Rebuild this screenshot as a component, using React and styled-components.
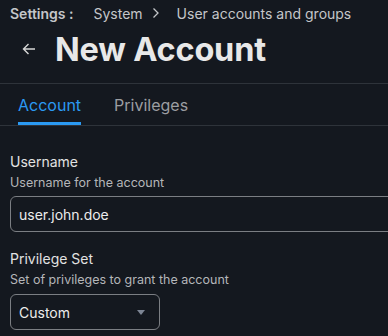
import styled, { createGlobalStyle } from "styled-components"

const Global = createGlobalStyle`
  html, body {
    margin: 0;
    padding: 0;
    background: #14181f;
    overflow: hidden;
  }
  body {
    font-family: Inter, "Noto Sans", sans-serif;
    color: #e6e6e6;
  }
`

const Page = styled.div`
  width: 388px;
  height: 336px;
  background: #14181f;
  overflow: hidden;
`

const Header = styled.header`
  padding: 4px 10px 0;
`

const Crumbs = styled.nav`
  display: flex;
  align-items: center;
  height: 18px;
  font-size: 14px;
  color: #c4c6c9;
  white-space: nowrap;
`

const CrumbRoot = styled.span`
  font-weight: 600;
  margin-right: 20px;
`

const Chevron = styled.span`
  margin: 0 17px 0 9px;
  display: inline-flex;
`

const TitleRow = styled.div`
  display: flex;
  align-items: center;
  height: 50px;
  padding-left: 12px;
  margin-top: 2px;
`

const BackButton = styled.button`
  display: flex;
  align-items: center;
  justify-content: center;
  background: none;
  border: 0;
  padding: 0;
  margin-right: 19px;
  color: #d6d6d6;
  cursor: pointer;
`

const Title = styled.h1`
  margin: 0;
  font-size: 32.5px;
  font-weight: 700;
  color: #e8e8e8;
  letter-spacing: -0.2px;
`

const Divider = styled.div`
  height: 1px;
  background: #2e333a;
  margin-top: ${p => p.$top || 0}px;
`

const Tabs = styled.div`
  display: flex;
  gap: 33px;
  padding: 0 18px;
  height: 41px;
`

const Tab = styled.button`
  position: relative;
  background: none;
  border: 0;
  padding: 0;
  font-family: inherit;
  font-size: 16px;
  color: ${p => (p.$active ? "#2b9af3" : "#9c9ea2")};
  cursor: pointer;
  &::after {
    content: "";
    position: absolute;
    left: 0;
    right: 0;
    bottom: 0;
    height: 3px;
    background: ${p => (p.$active ? "#2b9af3" : "transparent")};
  }
`

const Form = styled.div`
  padding: 27px 10px 0;
  display: flex;
  flex-direction: column;
  gap: 18px;
`

const Field = styled.div`
  display: flex;
  flex-direction: column;
`

const Label = styled.label`
  font-size: 14px;
  color: #e2e2e2;
  line-height: 17px;
`

const Help = styled.div`
  font-size: 12.5px;
  color: #b4b6b9;
  line-height: 16px;
  margin-top: 5px;
`

const Input = styled.input`
  box-sizing: border-box;
  margin-top: 5px;
  width: 400px;
  height: 36px;
  padding: 0 8px;
  background: #14181f;
  border: 1px solid #7b7e83;
  border-radius: 6px;
  font-family: inherit;
  font-size: 14px;
  color: #ececec;
  outline: none;
`

const Select = styled.div`
  box-sizing: border-box;
  margin-top: 6px;
  width: 150px;
  height: 36px;
  padding: 0 14px 0 8px;
  display: flex;
  align-items: center;
  justify-content: space-between;
  border: 1px solid #7b7e83;
  border-radius: 6px;
  font-size: 14px;
  color: #ececec;
`

const Caret = styled.span`
  width: 0;
  height: 0;
  border-left: 4px solid transparent;
  border-right: 4px solid transparent;
  border-top: 5px solid #7d8594;
`

export default function App() {
  return (
    <Page>
      <Global />
      <Header>
        <Crumbs>
          <CrumbRoot>Settings :</CrumbRoot>
          <span>System</span>
          <Chevron>
            <svg width="8" height="12" viewBox="0 0 8 12" fill="none">
              <path d="M1.5 1.5 L6 6 L1.5 10.5" stroke="#c4c6c9" strokeWidth="1.3" />
            </svg>
          </Chevron>
          <span>User accounts and groups</span>
        </Crumbs>
        <TitleRow>
          <BackButton aria-label="Back">
            <svg width="14" height="12" viewBox="0 0 14 12" fill="none">
              <path d="M13 6 H1.5 M6.5 1 L1.5 6 L6.5 11" stroke="#d6d6d6" strokeWidth="1.4" />
            </svg>
          </BackButton>
          <Title>New Account</Title>
        </TitleRow>
      </Header>
      <Divider $top={9} />
      <Tabs>
        <Tab $active>Account</Tab>
        <Tab>Privileges</Tab>
      </Tabs>
      <Divider />
      <Form>
        <Field>
          <Label>Username</Label>
          <Help>Username for the account</Help>
          <Input defaultValue="user.john.doe" />
        </Field>
        <Field>
          <Label>Privilege Set</Label>
          <Help>Set of privileges to grant the account</Help>
          <Select>
            <span>Custom</span>
            <Caret />
          </Select>
        </Field>
      </Form>
    </Page>
  )
}
